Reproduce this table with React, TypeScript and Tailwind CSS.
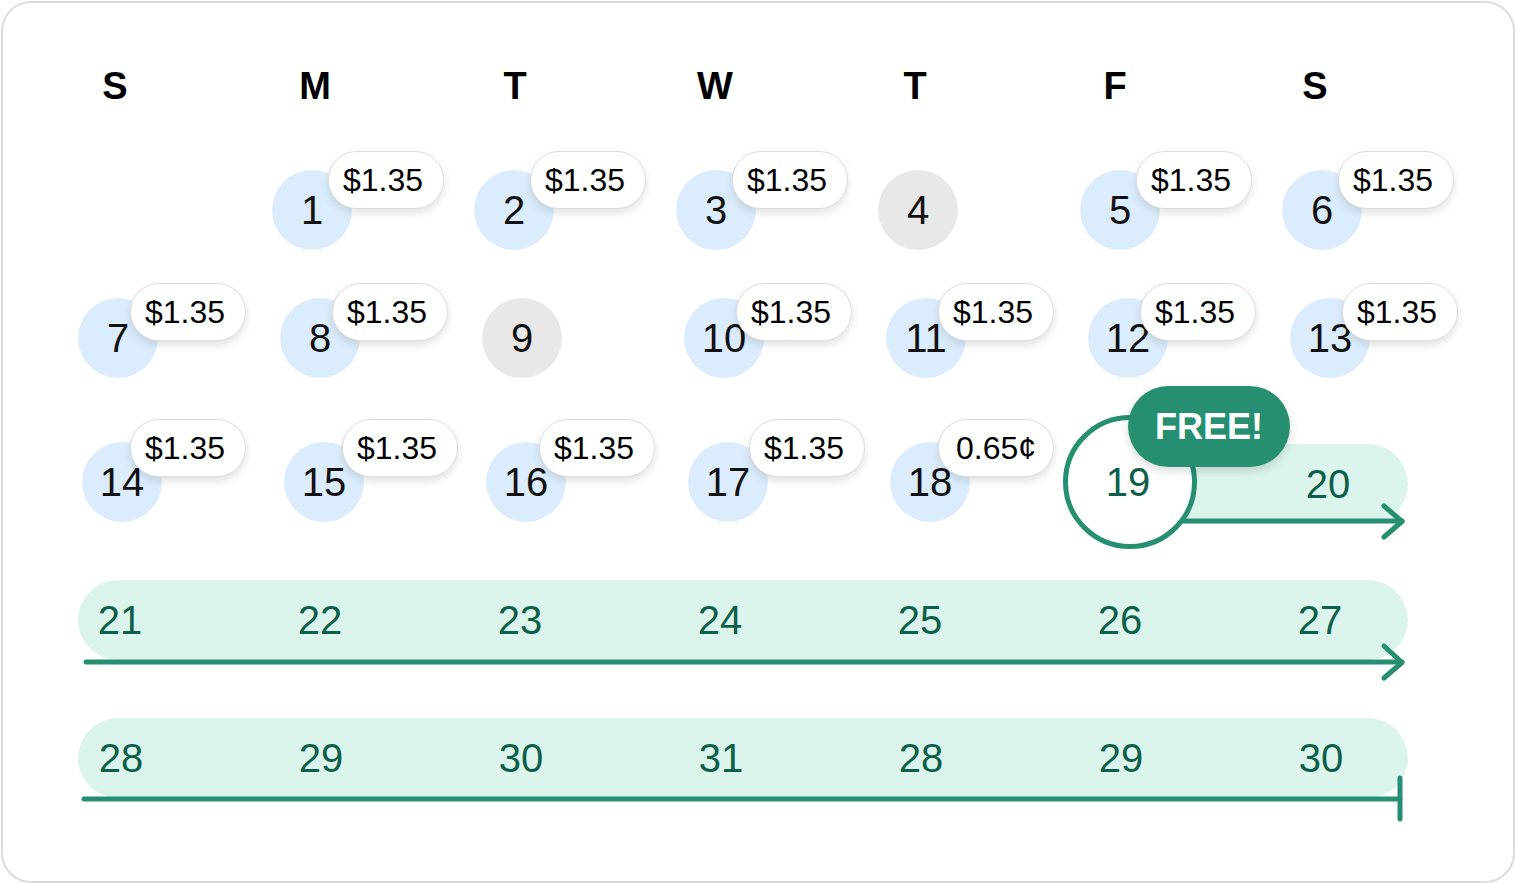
import React from "react";

const GREEN = "#268f72";

function Pill({ label, className }: { label: string; className: string }) {
  return (
    <div
      className={
        "absolute w-[116px] h-[58px] rounded-full bg-white border border-[#dedede] shadow-[0_4px_8px_rgba(0,0,0,0.12)] flex items-center justify-center text-[32px] leading-none text-black " +
        className
      }
    >
      <span className={label.startsWith("$") ? "pr-[6px]" : ""}>{label}</span>
    </div>
  );
}

function Day({
  n,
  gray,
  pill,
  pillClass,
}: {
  n?: number;
  gray?: boolean;
  pill?: string;
  pillClass?: string;
}) {
  if (n === undefined) return <div className="w-[80px] h-[80px] shrink-0" />;
  return (
    <div
      className={
        "relative w-[80px] h-[80px] shrink-0 rounded-full flex items-center justify-center text-[40px] leading-none text-[#111] " +
        (gray ? "bg-[#e8e8e8]" : "bg-[#dbedfc]")
      }
    >
      <span>{n}</span>
      {pill && <Pill label={pill} className={pillClass || ""} />}
    </div>
  );
}

export default function App() {
  const headers = ["S", "M", "T", "W", "T", "F", "S"];
  const row4 = [21, 22, 23, 24, 25, 26, 27];
  const row5 = [28, 29, 30, 31, 28, 29, 30];
  return (
    <div className="w-[1516px] h-[884px] bg-white p-px font-['Liberation_Sans',Arial,sans-serif]">
      <div className="w-full h-full rounded-[30px] border-2 border-[#dcdcdc] bg-white flex flex-col">
        {/* Header */}
        <div className="mt-[64px] ml-[92px] flex gap-[160px]">
          {headers.map((h, i) => (
            <div key={i} className="w-[40px] text-center text-[38px] font-bold leading-none text-black">
              {h}
            </div>
          ))}
        </div>

        {/* Row 1 */}
        <div className="mt-[65px] ml-[67px] flex gap-[122px]">
          <Day />
          {[1, 2, 3].map((n) => (
            <Day key={n} n={n} pill="$1.35" pillClass="left-[56px] top-[-19px]" />
          ))}
          <Day n={4} gray />
          {[5, 6].map((n) => (
            <Day key={n} n={n} pill="$1.35" pillClass="left-[56px] top-[-19px]" />
          ))}
        </div>

        {/* Row 2 */}
        <div className="mt-[48px] ml-[75px] flex gap-[122px]">
          {[7, 8].map((n) => (
            <Day key={n} n={n} pill="$1.35" pillClass="left-[52px] top-[-15px]" />
          ))}
          <Day n={9} gray />
          {[10, 11, 12, 13].map((n) => (
            <Day key={n} n={n} pill="$1.35" pillClass="left-[52px] top-[-15px]" />
          ))}
        </div>

        {/* Row 3 */}
        <div className="mt-[64px] ml-[79px] flex">
          <div className="flex gap-[122px]">
            <Day n={14} pill="$1.35" pillClass="left-[48px] top-[-23px]" />
            <Day n={15} pill="$1.35" pillClass="left-[58px] top-[-23px]" />
            <Day n={16} pill="$1.35" pillClass="left-[53px] top-[-23px]" />
            <Day n={17} pill="$1.35" pillClass="left-[61px] top-[-23px]" />
            <Day n={18} pill="0.65¢" pillClass="left-[48px] top-[-23px]" />
          </div>
          <div className="relative ml-[93px] h-[80px] flex items-center">
            <div className="relative z-10 w-[134px] h-[134px] -my-[27px] shrink-0 rounded-full border-[5px] border-[#268f72] bg-white flex items-center justify-center text-[40px] leading-none text-[#0c5f48]">
              <span className="-ml-[4px]">19</span>
            </div>
            <div className="-ml-[67px] mt-[4px] w-[278px] h-[80px] rounded-full bg-[#dcf5ec] flex items-center pl-[158px]">
              <span className="w-[80px] text-center text-[40px] leading-none text-[#0c5f48]">20</span>
            </div>
            <svg
              className="absolute left-0 top-0 overflow-visible"
              width="345"
              height="100"
              viewBox="0 0 345 100"
              fill="none"
            >
              <path d="M90 79 H339" stroke={GREEN} strokeWidth="5" strokeLinecap="round" />
              <path d="M321 64 L339 79.5 L321 95" stroke={GREEN} strokeWidth="5" strokeLinecap="round" strokeLinejoin="round" />
            </svg>
            <div className="absolute z-20 left-[65px] top-[-56px] w-[162px] h-[81px] rounded-full bg-[#268f72] shadow-[0_4px_10px_rgba(0,0,0,0.15)] flex items-center justify-center text-white text-[36px] font-bold leading-none">
              FREE!
            </div>
          </div>
        </div>

        {/* Row 4 */}
        <div className="relative mt-[58px] ml-[75px] w-[1330px] h-[80px]">
          <div className="w-full h-full rounded-full bg-[#dcf5ec] flex items-center pl-[2px] gap-[120px]">
            {row4.map((n) => (
              <span key={n} className="w-[80px] shrink-0 text-center text-[40px] leading-none text-[#0c5f48]">
                {n}
              </span>
            ))}
          </div>
          <svg className="absolute left-0 top-[60px] overflow-visible" width="1340" height="44" viewBox="0 0 1340 44" fill="none">
            <path d="M8 22 H1324" stroke={GREEN} strokeWidth="5" strokeLinecap="round" />
            <path d="M1306 6 L1324 22.5 L1306 38" stroke={GREEN} strokeWidth="5" strokeLinecap="round" strokeLinejoin="round" />
          </svg>
        </div>

        {/* Row 5 */}
        <div className="relative mt-[58px] ml-[75px] w-[1330px] h-[80px]">
          <div className="w-full h-full rounded-full bg-[#dcf5ec] flex items-center pl-[3px] gap-[120px]">
            {row5.map((n, i) => (
              <span key={i} className="w-[80px] shrink-0 text-center text-[40px] leading-none text-[#0c5f48]">
                {n}
              </span>
            ))}
          </div>
          <svg className="absolute left-0 top-[56px] overflow-visible" width="1340" height="50" viewBox="0 0 1340 50" fill="none">
            <path d="M6 25 H1322" stroke={GREEN} strokeWidth="5" strokeLinecap="round" />
            <path d="M1322 4 V45" stroke={GREEN} strokeWidth="5" strokeLinecap="round" />
          </svg>
        </div>
      </div>
    </div>
  );
}
